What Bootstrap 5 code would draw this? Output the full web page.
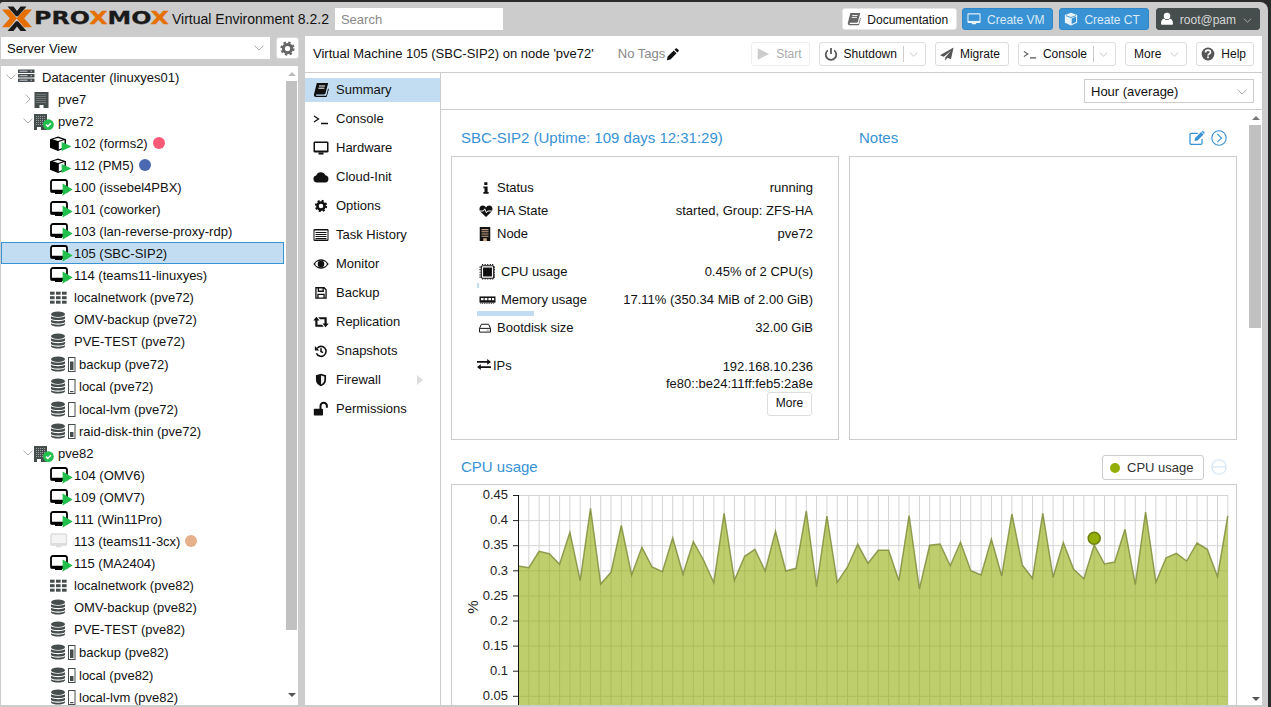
<!DOCTYPE html>
<html lang="en">
<head>
<meta charset="utf-8">
<title>Proxmox Virtual Environment</title>
<link href="https://cdn.jsdelivr.net/npm/bootstrap@5.3.0/dist/css/bootstrap.min.css" rel="stylesheet">
<style>
html,body{height:100%;overflow:hidden}
body{background:#2b2b2b;font:13px/1.2 "Liberation Sans",Arial,sans-serif;color:#111}
.pv-app{height:705px;margin:2px 3px 0 0;background:#ccc;border-radius:3px 8px 0 0;overflow:hidden}
.pv-head{height:34px;padding:0 8px 0 1px}
.pv-logo{width:168px;height:28px;flex:none}
.pv-ver{font-size:14px;margin:0 6px 0 3px;white-space:nowrap}
.pv-search{width:168px;height:22px;background:#fff;color:#888;padding:1px 6px 0;line-height:22px}
.hbtn{height:22px;border-radius:3px;font-size:12px;padding:2px 8px 0 4px;gap:6px;color:#111;background:#fff;border:1px solid #e6e6e6;white-space:nowrap}
.hbtn svg{width:14px;height:14px;fill:currentColor;color:#666;flex:none;margin-top:-2px}
.hbtn.blue{background:#3892d4;border-color:#2f86c6;color:#dbeaf6}
.hbtn.blue svg{color:#e8f2fa}
.hbtn.dark{background:#464d4d;border-color:#464d4d;color:#d5d7d7;padding:2px 7px 0 3px}
.hbtn.dark svg{color:#fff}
.hbtn svg.dn{width:9px;height:5px;color:#bbb;fill:none;margin-left:1px;margin-top:0}
.hgap{gap:5px}
.hsp1{margin-left:1px}.hsp2{margin-left:2px}
.pv-body{height:669px}
.pv-left{width:300px;flex:none}
.pv-toprow{margin-top:1px}
.pv-sel{width:269px;height:22px;margin-left:1px;background:#fff;padding:2px 6px 0;line-height:22px}
.pv-sel svg{margin-top:-2px}
.pv-sel svg,.selb svg{width:10px;height:6px;fill:none;color:#aaa}
.pv-gear{width:23px;height:22px;background:#fff;border:1px solid #ddd;border-radius:3px;margin-left:6px}
.pv-gear svg{width:15px;height:15px;color:#666}
.pv-tree{margin:7px 2px 0 1px;background:#fff;height:639px;overflow:hidden}
.tree-in{flex:1 1 auto;overflow:hidden;min-width:0}
.tr{height:22px;white-space:nowrap;padding-top:2px}
.tr svg,.tr .tdot{margin-top:-2px}
.tr.st{height:23px}
.tr.on{background:#c2ddf2;outline:1px solid #3892d4;outline-offset:-1px;margin-right:2px}
.l0{padding-left:5px}.l1{padding-left:22px}.l2{padding-left:49px}
.ex{width:12px;flex:none;color:#aaa;height:12px;fill:none}
.l1 .ex{width:11px}
.ti{width:25px;flex:none;height:18px;margin-right:-1px}
.tb{width:30px;flex:none;height:18px;margin-right:-1px}
.tdot{width:12px;height:12px;border-radius:50%;margin-left:5px;flex:none}
.sbar{width:12px;flex:none;background:#fff}
.sbar .thumb{background:#c1c1c1;margin-right:1px}
.scap{height:15px}
.up,.down{width:0;height:0;border-left:4px solid transparent;border-right:4px solid transparent;margin:0 auto}
.up{border-bottom:4px solid #777}
.down{border-top:4px solid #555}
.up.pale{border-bottom-color:#bbb}
.pv-main{width:957px;margin-left:5px;background:#fff;height:100%;flex:none}
.pv-tbar{height:37px;border-bottom:1px solid #ccc;padding:0 8px;gap:9px}
.pv-title{white-space:nowrap}
.pv-tags{color:#888;margin-left:15px;margin-right:auto;gap:1px}
.pv-tags svg{width:13px;height:13px;color:#111}
.tbtn{height:24px;border:1px solid #ddd;border-radius:3px;font-size:12px;padding:0 7px 0 4px;background:#fff;color:#111;white-space:nowrap;gap:6px}
.tbtn svg.i{width:14px;height:14px;color:#555}
.tbtn.off{color:#aaa;border-color:#eee}
.tbtn.off svg.i{color:#ccc}
.tbtn .sep{width:1px;height:16px;background:#ccc}
.tbtn svg.dn{width:9px;height:5px;fill:none;color:#bbb;margin-left:-1px}
.tbtn.txt{padding-left:8px;gap:10px}
.pv-menu{width:136px;flex:none;border-right:1px solid #ccc;padding-top:5px}
.mi{height:24px;margin-bottom:5px;padding-left:8px;gap:7px}
.mi.on{background:#c2ddf2}
.mi svg{width:16px;height:16px;color:#111;flex:none}
.mi .tri{width:0;height:0;border-top:5px solid transparent;border-bottom:5px solid transparent;border-left:6px solid #ddd;margin-left:auto;margin-right:17px}
.pv-right{min-width:0}
.pv-rbar{height:37px;border-bottom:1px solid #ccc;padding-right:8px}
.selb{width:170px;height:24px;border:1px solid #ccc;padding:1px 6px 0;line-height:22px}
.pv-scroll{height:595px;overflow:hidden}
.scr-in{padding:10px 0 0 10px;width:808px;flex:none}
.pnl{width:388px}
.pgap{gap:10px}
.phd{height:36px;padding:0 10px}
.phd2{height:34px;padding:0 10px}
.ptitle{font-size:15px;color:#3892d4;white-space:nowrap}
.ptool{width:16px;height:16px;color:#3892d4;flex:none}
.ptool.ml{margin-left:6px}
.ptool.pale{color:#cfe4f5}
.pbox{border:1px solid #ccc;height:284px;background:#fff}
.st-in{padding:19px 25px 0 25px}
.sr{height:23px}
.sr svg,.ipsvg{flex:none}
.sr .lab{width:20px;height:14px}
.sr .lab2{width:24px;height:16px}
.ipsvg{width:16px;height:11px;margin-top:1px}
.sg{margin-top:16px}
.sg2{margin-top:18.5px}
.sr.tall{height:22px}
.pbar{height:5px;background:#c2ddf2}
.pb-cpu{width:2px}.pb-mem{width:57px}
.wrap-bar{height:5px;margin-bottom:1px}
.ipv{line-height:17px;text-align:right}
.morebtn{height:24px;width:45px;border:1px solid #ddd;border-radius:3px;font-size:12px;background:#fff;color:#111;margin:0 1px 0 0;padding:0}
.cpusec{width:786px;margin-top:10px}
.legbtn{height:25px;width:102px;border:1px solid #ccc;border-radius:3px;padding:1px 0 0 7px;gap:7px;color:#333;background:#fff;margin-right:7px}
.legdot{width:10px;height:10px;border-radius:50%;background:#94ae0a}
.pchart{border:1px solid #ccc;border-bottom:0;height:240px;overflow:hidden}
.pchart svg{display:block;width:784px;height:239px;font-family:"Liberation Sans",Arial,sans-serif}
.sb1{height:549px}.sb2{height:203px}
.sbar2{width:13px}
.dot-a{background:#fa5a78}.dot-b{background:#4b69b0}.dot-c{background:#e5b08a}
</style>
</head>
<body>
<svg width="0" height="0" class="d-block" aria-hidden="true">
<defs>
<symbol id="book" viewBox="0 0 16 16"><path fill="currentColor" d="M3.800 1h11.400l-2.700 10.200c-.2.700-.7 1.200-1.500 1.200H3.600c-1 0-.9 1.300 0 1.300h9.600l1.900-7.200.8.400-2 7.400c-.1.400-.4.700-.9.700H3c-1.500 0-2.400-1.300-2-2.800z"/><path stroke="#fff" d="M6 4h6M5.400 6.200h6"/></symbol>
<symbol id="term" viewBox="0 0 16 16"><path fill="none" stroke="currentColor" stroke-width="1.300" d="M1 5l4.500 3L1 11M8 12.500h7"/></symbol>
<symbol id="desk" viewBox="0 0 16 16"><rect x=".5" y="1.500" width="15" height="11" rx="1.300" fill="currentColor"/><rect x="2" y="3" width="12" height="7.500" fill="#fff"/><rect x="5.500" y="12.500" width="5" height="2" fill="currentColor"/></symbol>
<symbol id="deskw" viewBox="0 0 16 16"><path fill="currentColor" d="M1.500 1.500h13c.6 0 1 .4 1 1v9c0 .6-.4 1-1 1h-4v1.500h-5v-1.500h-4c-.6 0-1-.4-1-1v-9c0-.6.4-1 1-1z"/><rect x="1.700" y="2.800" width="12.600" height="7.400" fill="#3892d4"/></symbol>
<symbol id="cloud" viewBox="0 0 16 16"><path fill="currentColor" d="M4 13.500a3.600 3.600 0 0 1-.8-7.100A5 5 0 0 1 12.400 6.200a3.700 3.700 0 0 1-.1 7.300z"/></symbol>
<symbol id="gear" viewBox="0 0 16 16"><circle cx="8" cy="8" r="4.400" fill="none" stroke="currentColor" stroke-width="3.200"/><circle cx="8" cy="8" r="6.400" fill="none" stroke="currentColor" stroke-width="2.400" stroke-dasharray="2.500 2.530"/></symbol>
<symbol id="list" viewBox="0 0 16 16"><rect x=".5" y="2" width="15" height="12" rx="1.200" fill="currentColor"/><rect x="1.500" y="3.500" width="13" height="9" fill="#fff"/><path stroke="currentColor" d="M2.500 5.500h11M2.500 7.500h11M2.500 9.500h11M2.500 11.500h11"/></symbol>
<symbol id="eye" viewBox="0 0 16 16"><path fill="currentColor" d="M.3 8C3 4.300 5.500 3.300 8 3.300s5 1 7.700 4.700c-2.700 3.700-5.200 4.700-7.700 4.700S3 11.700.3 8z"/><ellipse cx="8" cy="8" rx="5.800" ry="3.300" fill="#fff"/><circle cx="8" cy="8" r="3.300" fill="currentColor"/></symbol>
<symbol id="save" viewBox="0 0 16 16"><path fill="none" stroke="currentColor" stroke-width="1.500" d="M2.200 2h9.300l2.300 2.300v9.500H2.200zM5 2v4h5.500V2M4.500 13.800V9.500h7v4.300"/></symbol>
<symbol id="rt" viewBox="0 0 16 16"><path fill="currentColor" d="M.3 6.500h2V12.800h8.500l-1.800-2H4.500V6.500h2L3.400 2.800zM5.200 3.200h8.500v6.300h2L12.600 13.200 9.500 9.500h2V5.200H7z"/></symbol>
<symbol id="hist" viewBox="0 0 16 16"><path fill="none" stroke="currentColor" stroke-width="1.800" d="M3.500 5a5.700 5.700 0 1 1-.7 5.500M8 4.800v3.700l2.300 1.400"/><path fill="currentColor" d="M1 2.300v5h5z"/></symbol>
<symbol id="shield" viewBox="0 0 16 16"><path fill="currentColor" d="M8 .8l5.800 1.700V8c0 3.700-2.800 6-5.800 7.200C5 14 2.200 11.700 2.200 8V2.500z"/><path fill="#eee" d="M8 2.800l3.800 1.100V8c0 2.500-1.800 4.100-3.800 5z"/></symbol>
<symbol id="lock" viewBox="0 0 16 16"><rect x=".8" y="7.800" width="9.200" height="6.800" rx=".8" fill="currentColor"/><path fill="none" stroke="currentColor" stroke-width="2" d="M7.500 8V5a3.200 3.200 0 0 1 6.400 0v1.800"/></symbol>
<symbol id="info" viewBox="0 0 16 16"><path fill="currentColor" d="M6 1.500h3.600v3.200H6zM5 6.200h4.800v6.500H11v2H5v-2h1.300V8.200H5z"/></symbol>
<symbol id="heart" viewBox="0 0 16 16"><path fill="currentColor" d="M8 14.800L1.500 8.500C-.6 6 1 1.800 4.200 1.800c1.800 0 3 .9 3.800 2.200.8-1.300 2-2.200 3.800-2.200C15 1.800 16.600 6 14.500 8.500z"/><path fill="none" stroke="#fff" stroke-width="1.100" d="M.8 8h4.200l1.500-2.500 2 4.500 1.400-2h5.300"/></symbol>
<symbol id="bld" viewBox="0 0 14 16"><rect x="1" width="12" height="16" fill="currentColor"/><path stroke="#c9a78a" stroke-width="1.200" d="M3 3h8M3 5.500h8M3 8h8M3 10.500h8"/><rect x="5" y="12.800" width="4" height="3.200" fill="#c9a78a"/></symbol>
<symbol id="chip" viewBox="0 0 18 18"><path stroke="currentColor" stroke-width="1.300" stroke-dasharray="1.200 1.100" d="M3.500 0v18M6.400 0v18M9.300 0v18M12.200 0v18M14.800 0v18M0 3.500h18M0 6.400h18M0 9.300h18M0 12.200h18M0 14.800h18"/><rect x="2" y="2" width="14" height="14" rx="1.200" fill="#fff" stroke="currentColor" stroke-width="1.300"/><rect x="4" y="4" width="10" height="10" fill="currentColor"/></symbol>
<symbol id="mem" viewBox="0 0 18 18"><rect x="0" y="5" width="18" height="7" fill="currentColor"/><path fill="#fff" d="M1.600 6.800h3v2.600h-3zM5.800 6.800h3v2.600h-3zM10 6.800h3v2.600h-3zM14 6.800h2.500v2.600H14z"/><path stroke="currentColor" stroke-dasharray="1 1" d="M1 12.800h16"/></symbol>
<symbol id="hdd" viewBox="0 0 16 16"><path fill="none" stroke="currentColor" stroke-width="1.300" d="M3.200 3h9.600l2.500 5.500v5H.7v-5zM.7 8.500h14.600"/><path stroke="currentColor" d="M10.500 11h1M12.800 11h1"/></symbol>
<symbol id="xch" viewBox="0 0 14 11"><path fill="currentColor" d="M0 2h10.200V0L14 2.900l-3.800 2.900v-2H0zM14 7.200H3.800v-2L0 8.100 3.800 11V9H14z"/></symbol>
<symbol id="pen" viewBox="0 0 16 16"><path fill="currentColor" d="M1 15l1-4.500 7.500-7.500 3.500 3.500L5.500 14zM10.500 2l1.500-1.500c.4-.4 1-.4 1.400 0l2.100 2.100c.4.4.4 1 0 1.400L14 5.500z"/></symbol>
<symbol id="edit" viewBox="0 0 16 16"><path fill="none" stroke="currentColor" stroke-width="1.300" d="M13 9v4c0 .8-.6 1.300-1.300 1.300H2.300C1.500 14.300 1 13.800 1 13V4.500c0-.7.5-1.200 1.300-1.200h6.500"/><path fill="currentColor" d="M5.500 11l.6-3 6-6 2.400 2.400-6 6zM13 1.200c.4-.4 1-.4 1.400 0l1 1c.4.4.4 1 0 1.400l-.4.400L12.600 1.600z"/></symbol>
<symbol id="cc" viewBox="0 0 16 16"><circle cx="8" cy="8" r="7.200" fill="none" stroke="currentColor" stroke-width="1.100"/><path fill="none" stroke="currentColor" stroke-width="1.100" d="M6.300 3.800L10.500 8l-4.200 4.200"/></symbol>
<symbol id="minc" viewBox="0 0 16 16"><circle cx="8" cy="8" r="7.200" fill="none" stroke="currentColor" stroke-width="1.100"/><path stroke="currentColor" stroke-width="1.100" d="M1 8h14"/></symbol>
<symbol id="ques" viewBox="0 0 16 16"><circle cx="8" cy="8" r="7.300" fill="currentColor"/><path fill="none" stroke="#fff" stroke-width="2" d="M5.200 6.200c0-1.600 1.300-2.500 2.800-2.500s2.800.9 2.800 2.300c0 1.900-2.800 1.800-2.800 3.800"/><rect x="7" y="10.800" width="2" height="2" fill="#fff"/></symbol>
<symbol id="pow" viewBox="0 0 16 16"><path fill="none" stroke="currentColor" stroke-width="2" d="M4.400 3.800a6 6 0 1 0 7.200 0"/><path stroke="currentColor" stroke-width="2" d="M8 1v7"/></symbol>
<symbol id="plane" viewBox="0 0 16 16"><path fill="currentColor" d="M15.500.5L0 9.300l4.300 1.800L12.800 4 6 12v3.500l2.600-3.100 3.900 1.700z"/></symbol>
<symbol id="play" viewBox="0 0 16 16"><path fill="currentColor" d="M2 1.500L15 8 2 14.500z"/></symbol>
<symbol id="user" viewBox="0 0 16 16"><circle cx="8" cy="4.500" r="3.700" fill="currentColor"/><path fill="currentColor" d="M2 14.500c-.5 0-.8-.4-.8-.8 0-3 .8-6 3.500-6 1 1 2 1.400 3.300 1.400s2.300-.4 3.300-1.400c2.700 0 3.500 3 3.500 6 0 .4-.3.800-.8.800z"/></symbol>
<symbol id="cube" viewBox="0 0 16 16"><path fill="currentColor" d="M8 .8l7 2.700v8.800l-7 3-7-3V3.500z"/><path fill="#3892d4" d="M8.800 7.300l5-1.900v6.100l-5 2.300z"/><path fill="none" stroke="#3892d4" d="M2.300 4.200L8 6.300l5.700-2.100"/></symbol>
<symbol id="dn" viewBox="0 0 10 6"><path stroke="currentColor" fill="none" d="M.5.700L5 5 9.500.700"/></symbol>
<symbol id="rg" viewBox="0 0 6 10"><path stroke="currentColor" fill="none" d="M.700.500L5 5 .700 9.500"/></symbol>
<symbol id="dc" viewBox="0 0 17 14"><g fill="#464d4d"><rect y=".5" width="16.500" height="3.500" rx=".6"/><rect y="5" width="16.500" height="3.500" rx=".6"/><rect y="9.500" width="16.500" height="3.500" rx=".6"/></g><path stroke="#ccd" d="M1.500 2.200h8M12.500 2.200h1.500M1.500 6.700h8M12.500 6.700h1.500M1.500 11.200h8M12.500 11.200h1.500"/></symbol>
<symbol id="node" viewBox="0 0 25 18"><rect x=".5" y="2" width="14" height="16" fill="#464d4d"/><path stroke="#9aa0a0" stroke-dasharray="1 1" d="M2.500 4.500h10M2.500 6.500h10M2.500 8.500h10M2.500 10.500h10M2.500 12.500h10"/><rect x="5.500" y="15" width="4" height="3" fill="#fff"/></symbol>
<symbol id="nodeok" viewBox="0 0 25 18"><rect x="0" y="2" width="13" height="16" fill="#464d4d"/><path stroke="#9aa0a0" stroke-dasharray="1 1" d="M2 4.500h9M2 6.500h9M2 8.500h9M2 10.500h9M2 12.500h9"/><rect x="3" y="15" width="4" height="3" fill="#fff"/><circle cx="14.400" cy="12.600" r="5.400" fill="#21bf4b"/><path fill="none" stroke="#fff" stroke-width="1.500" d="M12 12.600l1.800 1.800 3.100-3.100"/></symbol>
<symbol id="vm" viewBox="0 0 25 18"><rect x="1" y="2" width="16" height="11.500" rx="2" fill="#fff" stroke="#000" stroke-width="1.800"/><rect x=".3" y="11.800" width="17.400" height="3" rx="1" fill="#000"/><rect x="5" y="14" width="7" height="2" fill="#000"/><path fill="#21bf4b" d="M12.600 5.500l10.100 6L12.600 17.500z"/></symbol>
<symbol id="vmoff" viewBox="0 0 25 18"><rect x="1" y="2" width="15.500" height="11" rx="1.500" fill="#f4f4f4" stroke="#ddd" stroke-width="1.500"/><rect x=".3" y="11" width="16.900" height="2.500" rx="1" fill="#ddd"/><rect x="6" y="13" width="5.500" height="2.300" fill="#ddd"/></symbol>
<symbol id="ct" viewBox="0 0 25 18"><path fill="#000" d="M8 2.500l8 2.700v8.500l-8 3.300-8-3.300V5.200z"/><path fill="#fff" d="M8.800 8l5.700-1.900v7l-5.700 2.300zM2.800 5.300L8 3.900l5 1.500-5 1.700z"/><path fill="#21bf4b" d="M11.700 8l9.800 4.500L11.700 17z"/></symbol>
<symbol id="grid" viewBox="0 0 25 18"><g fill="#464d4d"><rect y="3.700" width="4.600" height="3"/><rect x="6" y="3.700" width="4.600" height="3"/><rect x="12" y="3.700" width="4.600" height="3"/><rect y="8.200" width="4.600" height="3"/><rect x="6" y="8.200" width="4.600" height="3"/><rect x="12" y="8.200" width="4.600" height="3"/><rect y="12.700" width="4.600" height="3"/><rect x="6" y="12.700" width="4.600" height="3"/><rect x="12" y="12.700" width="4.600" height="3"/></g></symbol>
<symbol id="db" viewBox="0 0 25 18"><g fill="#464d4d"><ellipse cx="8" cy="4.200" rx="7" ry="2.800"/><path d="M1 6.300c1.500 1.800 12.500 1.800 14 0v2.300c-1.500 2-12.500 2-14 0zM1 9.800c1.500 1.800 12.500 1.800 14 0v2.300c-1.500 2-12.500 2-14 0zM1 13.300c1.500 1.800 12.500 1.800 14 0v1.200c-1.500 2.700-12.500 2.700-14 0z"/></g></symbol>
<symbol id="bat9" viewBox="0 0 30 18"><use href="#db" width="25" height="18"/><rect x="18.500" y="2.500" width="6.500" height="14" fill="#fff" stroke="#464d4d"/><rect x="20" y="6.500" width="3.500" height="8.500" fill="#464d4d"/></symbol>
<symbol id="bat4" viewBox="0 0 30 18"><use href="#db" width="25" height="18"/><rect x="18.500" y="2.500" width="6.500" height="14" fill="#fff" stroke="#464d4d"/><rect x="20" y="10" width="3.500" height="5" fill="#464d4d"/></symbol>
<symbol id="bat1" viewBox="0 0 30 18"><use href="#db" width="25" height="18"/><rect x="18.500" y="2.500" width="6.500" height="14" fill="#fff" stroke="#464d4d"/><rect x="20" y="14" width="3.500" height="1.200" fill="#464d4d"/></symbol>
<symbol id="bat0" viewBox="0 0 30 18"><use href="#db" width="25" height="18"/><rect x="18.500" y="2.500" width="6.500" height="14" fill="#fff" stroke="#464d4d"/></symbol>
</defs>
</svg>

<div class="pv-app d-flex flex-column">
  <header class="pv-head d-flex align-items-center">
    <svg class="pv-logo" viewBox="0 0 168 28">
      <g><path fill="#e57000" d="M1 4.500h7.500l7.500 8.800-7.500 9H1l7.800-9zM31 4.500h-7.500L15.500 13.300l7.500 9h8l-7.800-9z"/><path fill="#1a1a1a" d="M6.500 1.500h6l3.500 4.500 3.500-4.500h6L17 11.200h-2zM6.500 26h6l3.500-4.500 3.500 4.500h6L17 16.200h-2z"/></g>
      <text x="33" y="19" font-family="DejaVu Sans" font-weight="700" font-size="18" textLength="135" lengthAdjust="spacingAndGlyphs" fill="#1a1a1a" stroke="#1a1a1a" stroke-width=".3">PRO<tspan fill="#e57000" stroke="#e57000">X</tspan>MO<tspan fill="#e57000" stroke="#e57000">X</tspan></text>
    </svg>
    <span class="pv-ver">Virtual Environment 8.2.2</span>
    <div class="pv-search">Search</div>
    <div class="d-flex align-items-center ms-auto hgap">
      <button class="hbtn d-inline-flex align-items-center"><svg><use href="#book"/></svg>Documentation</button>
      <button class="hbtn blue d-inline-flex align-items-center"><svg><use href="#deskw"/></svg>Create VM</button>
      <button class="hbtn blue d-inline-flex align-items-center hsp1"><svg><use href="#cube"/></svg>Create CT</button>
      <button class="hbtn dark d-inline-flex align-items-center hsp2"><svg><use href="#user"/></svg>root@pam<svg class="dn"><use href="#dn"/></svg></button>
    </div>
  </header>

  <div class="pv-body d-flex">
    <aside class="pv-left d-flex flex-column">
      <div class="d-flex pv-toprow">
        <div class="pv-sel d-flex justify-content-between align-items-center">Server View<svg><use href="#dn"/></svg></div>
        <div class="pv-gear d-flex align-items-center justify-content-center"><svg><use href="#gear"/></svg></div>
      </div>
      <div class="pv-tree d-flex">
        <div class="tree-in">
          <div class="tr l0 d-flex align-items-center"><svg class="ex"><use href="#dn" width="10" height="6" y="3"/></svg><svg class="ti"><use href="#dc" width="17" height="14" y="1"/></svg>Datacenter (linuxyes01)</div>
          <div class="tr l1 d-flex align-items-center"><svg class="ex"><use href="#rg" width="6" height="10" x="2" y="1"/></svg><svg class="ti"><use href="#node"/></svg>pve7</div>
          <div class="tr l1 d-flex align-items-center"><svg class="ex"><use href="#dn" width="10" height="6" y="3"/></svg><svg class="ti"><use href="#nodeok"/></svg>pve72</div>
          <div class="tr l2 d-flex align-items-center"><svg class="ti"><use href="#ct"/></svg>102 (forms2)<span class="tdot dot-a"></span></div>
          <div class="tr l2 d-flex align-items-center"><svg class="ti"><use href="#ct"/></svg>112 (PM5)<span class="tdot dot-b"></span></div>
          <div class="tr l2 d-flex align-items-center"><svg class="ti"><use href="#vm"/></svg>100 (issebel4PBX)</div>
          <div class="tr l2 d-flex align-items-center"><svg class="ti"><use href="#vm"/></svg>101 (coworker)</div>
          <div class="tr l2 d-flex align-items-center"><svg class="ti"><use href="#vm"/></svg>103 (lan-reverse-proxy-rdp)</div>
          <div class="tr l2 on d-flex align-items-center"><svg class="ti"><use href="#vm"/></svg>105 (SBC-SIP2)</div>
          <div class="tr l2 d-flex align-items-center"><svg class="ti"><use href="#vm"/></svg>114 (teams11-linuxyes)</div>
          <div class="tr l2 d-flex align-items-center"><svg class="ti"><use href="#grid"/></svg>localnetwork (pve72)</div>
          <div class="tr l2 d-flex align-items-center"><svg class="ti"><use href="#db"/></svg>OMV-backup (pve72)</div>
          <div class="tr l2 d-flex align-items-center"><svg class="ti"><use href="#db"/></svg>PVE-TEST (pve72)</div>
          <div class="tr st l2 d-flex align-items-center"><svg class="tb"><use href="#bat9"/></svg>backup (pve72)</div>
          <div class="tr l2 d-flex align-items-center"><svg class="tb"><use href="#bat1"/></svg>local (pve72)</div>
          <div class="tr st l2 d-flex align-items-center"><svg class="tb"><use href="#bat0"/></svg>local-lvm (pve72)</div>
          <div class="tr l2 d-flex align-items-center"><svg class="tb"><use href="#bat4"/></svg>raid-disk-thin (pve72)</div>
          <div class="tr l1 d-flex align-items-center"><svg class="ex"><use href="#dn" width="10" height="6" y="3"/></svg><svg class="ti"><use href="#nodeok"/></svg>pve82</div>
          <div class="tr l2 d-flex align-items-center"><svg class="ti"><use href="#vm"/></svg>104 (OMV6)</div>
          <div class="tr l2 d-flex align-items-center"><svg class="ti"><use href="#vm"/></svg>109 (OMV7)</div>
          <div class="tr l2 d-flex align-items-center"><svg class="ti"><use href="#vm"/></svg>111 (Win11Pro)</div>
          <div class="tr l2 d-flex align-items-center"><svg class="ti"><use href="#vmoff"/></svg>113 (teams11-3cx)<span class="tdot dot-c"></span></div>
          <div class="tr l2 d-flex align-items-center"><svg class="ti"><use href="#vm"/></svg>115 (MA2404)</div>
          <div class="tr l2 d-flex align-items-center"><svg class="ti"><use href="#grid"/></svg>localnetwork (pve82)</div>
          <div class="tr l2 d-flex align-items-center"><svg class="ti"><use href="#db"/></svg>OMV-backup (pve82)</div>
          <div class="tr l2 d-flex align-items-center"><svg class="ti"><use href="#db"/></svg>PVE-TEST (pve82)</div>
          <div class="tr st l2 d-flex align-items-center"><svg class="tb"><use href="#bat9"/></svg>backup (pve82)</div>
          <div class="tr st l2 d-flex align-items-center"><svg class="tb"><use href="#bat4"/></svg>local (pve82)</div>
          <div class="tr l2 d-flex align-items-center"><svg class="tb"><use href="#bat1"/></svg>local-lvm (pve82)</div>
        </div>
        <div class="sbar d-flex flex-column">
          <div class="scap d-flex align-items-center"><div class="up pale"></div></div>
          <div class="thumb sb1"></div>
          <div class="flex-grow-1 d-flex align-items-end pb-2"><div class="down"></div></div>
        </div>
      </div>
    </aside>

    <main class="pv-main d-flex flex-column">
      <div class="pv-tbar d-flex align-items-center">
        <span class="pv-title">Virtual Machine 105 (SBC-SIP2) on node 'pve72'</span>
        <span class="pv-tags d-inline-flex align-items-center">No Tags<svg><use href="#pen"/></svg></span>
        <button class="tbtn off d-inline-flex align-items-center"><svg class="i"><use href="#play"/></svg>Start</button>
        <button class="tbtn d-inline-flex align-items-center"><svg class="i"><use href="#pow"/></svg>Shutdown<span class="sep"></span><svg class="dn"><use href="#dn"/></svg></button>
        <button class="tbtn d-inline-flex align-items-center pe-2"><svg class="i"><use href="#plane"/></svg>Migrate</button>
        <button class="tbtn d-inline-flex align-items-center"><svg class="i"><use href="#term"/></svg>Console<span class="sep"></span><svg class="dn"><use href="#dn"/></svg></button>
        <button class="tbtn txt d-inline-flex align-items-center">More<svg class="dn"><use href="#dn"/></svg></button>
        <button class="tbtn d-inline-flex align-items-center"><svg class="i"><use href="#ques"/></svg>Help</button>
      </div>
      <div class="d-flex flex-grow-1 overflow-hidden">
        <nav class="pv-menu">
          <div class="mi on d-flex align-items-center"><svg><use href="#book"/></svg>Summary</div>
          <div class="mi d-flex align-items-center"><svg><use href="#term"/></svg>Console</div>
          <div class="mi d-flex align-items-center"><svg><use href="#desk"/></svg>Hardware</div>
          <div class="mi d-flex align-items-center"><svg><use href="#cloud"/></svg>Cloud-Init</div>
          <div class="mi d-flex align-items-center"><svg><use href="#gear" x="1.500" y="1.500" width="13" height="13"/></svg>Options</div>
          <div class="mi d-flex align-items-center"><svg><use href="#list"/></svg>Task History</div>
          <div class="mi d-flex align-items-center"><svg><use href="#eye"/></svg>Monitor</div>
          <div class="mi d-flex align-items-center"><svg><use href="#save" x="1" y="1" width="14" height="14"/></svg>Backup</div>
          <div class="mi d-flex align-items-center"><svg><use href="#rt"/></svg>Replication</div>
          <div class="mi d-flex align-items-center"><svg><use href="#hist" x="1" y="1" width="14" height="14"/></svg>Snapshots</div>
          <div class="mi d-flex align-items-center"><svg><use href="#shield" x="1" y="1" width="14" height="14"/></svg>Firewall<span class="tri"></span></div>
          <div class="mi d-flex align-items-center"><svg><use href="#lock"/></svg>Permissions</div>
        </nav>
        <section class="pv-right flex-grow-1 d-flex flex-column">
          <div class="pv-rbar d-flex align-items-center justify-content-end">
            <div class="selb d-flex align-items-center justify-content-between">Hour (average)<svg><use href="#dn"/></svg></div>
          </div>
          <div class="pv-scroll d-flex">
            <div class="scr-in">
              <div class="d-flex pgap">
                <div class="pnl">
                  <div class="phd d-flex align-items-center"><span class="ptitle">SBC-SIP2 (Uptime: 109 days 12:31:29)</span></div>
                  <div class="pbox st-in">
                    <div class="sr d-flex align-items-center"><svg class="lab"><use href="#info" x="2" width="14" height="14"/></svg>Status<span class="ms-auto">running</span></div>
                    <div class="sr d-flex align-items-center"><svg class="lab"><use href="#heart" width="16" height="14" x="1"/></svg>HA State<span class="ms-auto">started, Group: ZFS-HA</span></div>
                    <div class="sr d-flex align-items-center"><svg class="lab"><use href="#bld" x="1" width="14" height="14"/></svg>Node<span class="ms-auto">pve72</span></div>
                    <div class="sr tall sg d-flex align-items-center"><svg class="lab2"><use href="#chip" x="2" width="17" height="16"/></svg>CPU usage<span class="ms-auto">0.45% of 2 CPU(s)</span></div>
                    <div class="wrap-bar"><div class="pbar pb-cpu"></div></div>
                    <div class="sr tall d-flex align-items-center"><svg class="lab2"><use href="#mem" x="2" width="17" height="16"/></svg>Memory usage<span class="ms-auto">17.11% (350.34 MiB of 2.00 GiB)</span></div>
                    <div class="wrap-bar"><div class="pbar pb-mem"></div></div>
                    <div class="sr tall d-flex align-items-center"><svg class="lab"><use href="#hdd" x="2" y="1" width="12" height="12"/></svg>Bootdisk size<span class="ms-auto">32.00 GiB</span></div>
                    <div class="d-flex sg2">
                      <svg class="ipsvg"><use href="#xch" width="14" height="11"/></svg>
                      <span>IPs</span>
                      <div class="ms-auto d-flex flex-column align-items-end">
                        <div class="ipv">192.168.10.236<br>fe80::be24:11ff:feb5:2a8e</div>
                        <button class="morebtn">More</button>
                      </div>
                    </div>
                  </div>
                </div>
                <div class="pnl">
                  <div class="phd d-flex align-items-center"><span class="ptitle">Notes</span><svg class="ptool ms-auto"><use href="#edit"/></svg><svg class="ptool ml"><use href="#cc"/></svg></div>
                  <div class="pbox"></div>
                </div>
              </div>
              <div class="cpusec">
                <div class="phd2 d-flex align-items-center"><span class="ptitle">CPU usage</span>
                  <div class="legbtn d-flex align-items-center ms-auto"><span class="legdot"></span>CPU usage</div>
                  <svg class="ptool pale"><use href="#minc"/></svg>
                </div>
                <div class="pchart">
                  <svg id="cpu" viewBox="0 0 784 239" role="img" aria-label="CPU usage chart"></svg>
                </div>
              </div>
            </div>
            <div class="sbar sbar2 d-flex flex-column">
              <div class="scap d-flex align-items-center"><div class="up"></div></div>
              <div class="thumb sb2"></div>
              <div class="flex-grow-1 d-flex align-items-end pb-1"><div class="down"></div></div>
            </div>
          </div>
        </section>
      </div>
    </main>
  </div>
</div>

<script src="https://cdn.jsdelivr.net/npm/bootstrap@5.3.0/dist/js/bootstrap.bundle.min.js"></script>
<script>
(function(){
  var ys=[81,82.7,66.3,68.7,79.3,47.3,95.7,23.3,99,87.3,40.3,90,62.3,82,86.7,53,89.3,56.7,75,97.7,28.3,95.3,71.3,64.3,86,46.3,86,83.3,26,101.7,31,97.3,82,59.3,78.3,65.3,65.3,95.7,30.7,104,60.3,59,80.7,57.3,85.7,90,54.3,91,29,80,93.3,28.3,92.3,57.7,84.3,93.7,60,79,77,44.3,99.7,27,97.3,72.7,68.3,76,58,64.3,91.7,31];
  var x0=66.5, dx=10.28, bottom=239, s='';
  var labs=['0.45','0.4','0.35','0.3','0.25','0.2','0.15','0.1','0.05'];
  var i,x,y;
  for(i=0;i<70;i++){x=(x0+i*dx).toFixed(1);s+='<line x1="'+x+'" x2="'+x+'" y1="10" y2="239" stroke="#d4d4d4"/>';}
  for(i=0;i<9;i++){y=(10.5+i*25.1).toFixed(1);
    s+='<line x1="'+(x0)+'" x2="776" y1="'+y+'" y2="'+y+'" stroke="#d4d4d4"/>';
    s+='<line x1="61" x2="66" y1="'+y+'" y2="'+y+'" stroke="#222"/>';
    s+='<text x="56" y="'+(+y+3.7)+'" text-anchor="end" font-size="13" fill="#222">'+labs[i]+'</text>';
  }
  var pts=ys.map(function(v,i){return (x0+i*dx).toFixed(1)+','+v;}).join(' ');
  s+='<polygon points="'+x0+','+bottom+' '+pts+' '+(x0+69*dx).toFixed(1)+','+bottom+'" fill="#94ae0a" fill-opacity=".6"/>';
  s+='<polyline points="'+pts+'" fill="none" stroke="#7f8f3c" stroke-opacity=".85" stroke-width="1.5"/>';
  s+='<line x1="66.500" x2="66.500" y1="10" y2="239" stroke="#111"/>';
  s+='<circle cx="'+(x0+56*dx).toFixed(1)+'" cy="53.300" r="6" fill="#94ae0a" stroke="#6d7f0a" stroke-width="1.500"/>';
  s+='<text transform="translate(26 122) rotate(-90)" text-anchor="middle" font-size="15" fill="#222">%</text>';
  document.getElementById('cpu').innerHTML=s;
})();
</script>
</body>
</html>
